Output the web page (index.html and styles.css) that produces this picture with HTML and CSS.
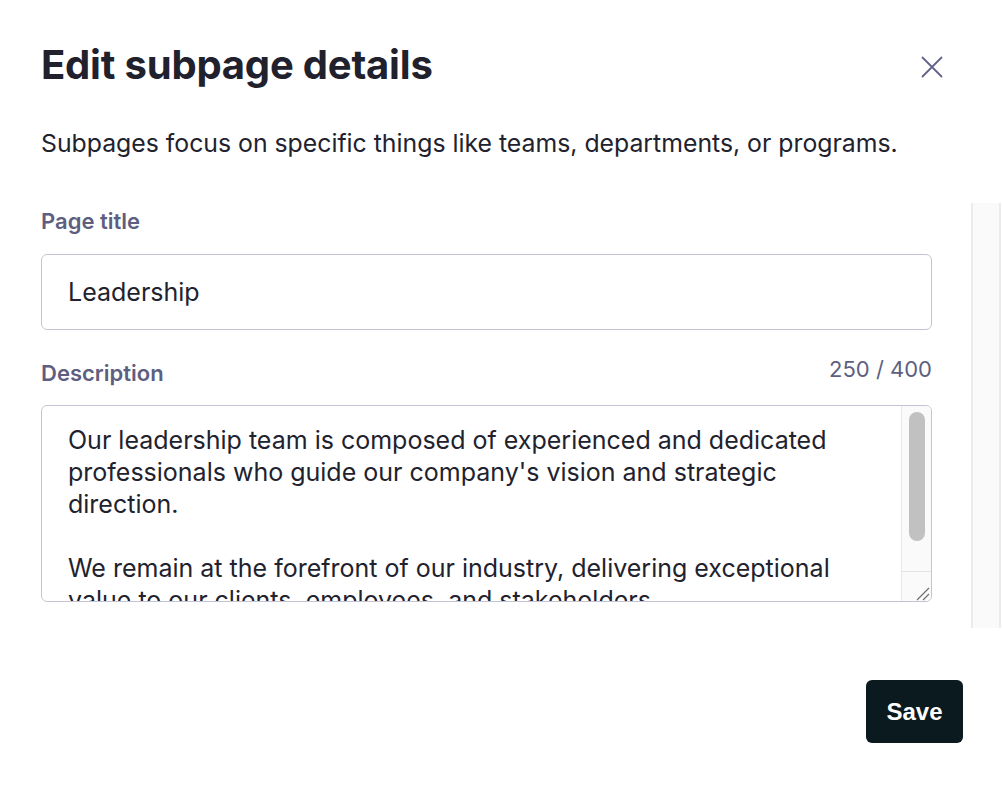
FILE: index.html
```html
<!DOCTYPE html>
<html lang="en">
<head>
<meta charset="utf-8">
<title>Edit subpage details</title>
<link rel="stylesheet" href="styles.css">
</head>
<body>
<div class="modal">
  <header class="modal-header">
    <h1 class="modal-title">Edit subpage details</h1>
    <button class="close-btn" aria-label="Close">
      <svg width="22" height="22" viewBox="0 0 22 22" fill="none" stroke="#62628a" stroke-width="1.8" stroke-linecap="round">
        <path d="M1.5 1.5 L20.5 20.5 M20.5 1.5 L1.5 20.5"/>
      </svg>
    </button>
  </header>
  <p class="modal-subtitle">Subpages focus on specific things like teams, departments, or programs.</p>
  <div class="modal-body">
    <div class="form">
      <label class="field-label">Page title</label>
      <div class="text-input">Leadership</div>
      <div class="label-row">
        <label class="field-label">Description</label>
        <span class="counter">250 / 400</span>
      </div>
      <div class="textarea">
        <div class="textarea-text">Our leadership team is composed of experienced and dedicated professionals who guide our company's vision and strategic direction.

We remain at the forefront of our industry, delivering exceptional value to our clients, employees, and stakeholders.</div>
        <div class="ta-scrollbar">
          <div class="ta-track"><div class="ta-thumb"></div></div>
          <div class="ta-resizer">
            <svg width="28" height="29" viewBox="0 0 28 29" fill="none" stroke="#6e6e6e" stroke-width="1.2">
              <path d="M15 28 L27 16 M21 28 L27 22"/>
            </svg>
          </div>
        </div>
      </div>
    </div>
    <div class="body-scrollbar"></div>
  </div>
  <footer class="modal-footer">
    <button class="save-btn">Save</button>
  </footer>
</div>
</body>
</html>
```

FILE: styles.css
```css
* { box-sizing: border-box; }
html, body { margin: 0; padding: 0; background: #ffffff; }
body {
  font-family: Inter, "Noto Sans", sans-serif;
  color: #22222e;
  width: 1002px;
  height: 786px;
  overflow: hidden;
}
.modal {
  padding: 41px 0 0 41px;
}
.modal-header {
  display: flex;
  align-items: center;
  justify-content: space-between;
  padding-right: 50px;
}
.modal-title {
  margin: 0;
  font-size: 40px;
  line-height: 48px;
  font-weight: 700;
  letter-spacing: -0.2px;
  color: #21212d;
}
.close-btn {
  width: 40px;
  height: 40px;
  margin-top: 4px;
  padding: 0;
  border: 0;
  background: transparent;
  display: flex;
  align-items: center;
  justify-content: center;
}
.modal-subtitle {
  margin: 38px 0 0 0;
  font-size: 24.8px;
  line-height: 32px;
  color: #22222e;
}
.modal-body {
  display: flex;
  margin-top: 44px;
  height: 425px;
}
.form {
  flex: 0 0 891px;
  padding-top: 4px;
  display: flex;
  flex-direction: column;
}
.field-label {
  font-size: 22px;
  line-height: 28px;
  font-weight: 600;
  color: #5e5f80;
}
.text-input {
  margin-top: 19px;
  height: 76px;
  border: 1px solid #c4c3d6;
  border-radius: 6px;
  padding: 21px 26px;
  font-size: 25px;
  line-height: 32px;
  color: #22222e;
}
.label-row {
  margin-top: 29px;
  display: flex;
  justify-content: space-between;
  align-items: flex-start;
}
.counter {
  font-size: 22px;
  line-height: 20px;
  color: #5e5f80;
}
.textarea {
  margin-top: 18px;
  height: 197px;
  border: 1px solid #c4c3d6;
  border-radius: 6px;
  display: flex;
  overflow: hidden;
}
.textarea-text {
  flex: 1;
  padding: 18px 20px 0 26px;
  font-size: 25px;
  line-height: 32px;
  white-space: pre-wrap;
  overflow: hidden;
  color: #22222e;
}
.ta-scrollbar {
  flex: 0 0 30px;
  display: flex;
  flex-direction: column;
  background: #fafafa;
  border-left: 1px solid #e8e8e8;
}
.ta-track {
  flex: 1;
  padding: 6px 6px 0 7px;
}
.ta-thumb {
  height: 129px;
  border-radius: 8px;
  background: #c1c1c1;
}
.ta-resizer {
  height: 30px;
  border-top: 1px solid #e4e4e4;
}
.ta-resizer svg { display: block; }
.body-scrollbar {
  flex: 0 0 30px;
  margin-left: 39px;
  background: #fafafa;
  border-left: 2px solid #ebebeb;
  border-right: 2px solid #ebebeb;
}
.modal-footer {
  display: flex;
  justify-content: flex-end;
  padding-right: 39px;
  margin-top: 52px;
}
.save-btn {
  width: 97px;
  height: 63px;
  border: 0;
  border-radius: 6px;
  background: #0b1a1e;
  color: #ffffff;
  font-family: "Liberation Sans", Arial, sans-serif;
  font-weight: 700;
  font-size: 24px;
  padding: 0;
}
```
